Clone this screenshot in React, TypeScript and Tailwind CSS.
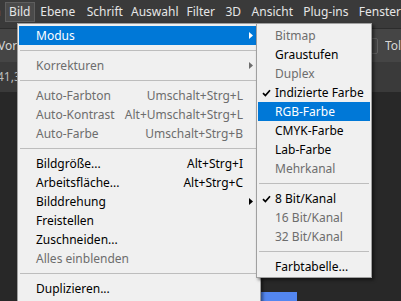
import React from "react";

type Item =
  | { sep: true }
  | {
      sep?: false;
      label: string;
      shortcut?: string;
      disabled?: boolean;
      active?: boolean;
      sub?: boolean;
      checked?: boolean;
    };

const mainMenu: Item[] = [
  { label: "Modus", sub: true, active: true },
  { sep: true },
  { label: "Korrekturen", sub: true, disabled: true },
  { sep: true },
  { label: "Auto-Farbton", shortcut: "Umschalt+Strg+L", disabled: true },
  { label: "Auto-Kontrast", shortcut: "Alt+Umschalt+Strg+L", disabled: true },
  { label: "Auto-Farbe", shortcut: "Umschalt+Strg+B", disabled: true },
  { sep: true },
  { label: "Bildgröße...", shortcut: "Alt+Strg+I" },
  { label: "Arbeitsfläche...", shortcut: "Alt+Strg+C" },
  { label: "Bilddrehung", sub: true },
  { label: "Freistellen" },
  { label: "Zuschneiden..." },
  { label: "Alles einblenden", disabled: true },
  { sep: true },
  { label: "Duplizieren..." },
];

const modusMenu: Item[] = [
  { label: "Bitmap", disabled: true },
  { label: "Graustufen" },
  { label: "Duplex", disabled: true },
  { label: "Indizierte Farbe", checked: true },
  { label: "RGB-Farbe", active: true },
  { label: "CMYK-Farbe" },
  { label: "Lab-Farbe" },
  { label: "Mehrkanal", disabled: true },
  { sep: true },
  { label: "8 Bit/Kanal", checked: true },
  { label: "16 Bit/Kanal", disabled: true },
  { label: "32 Bit/Kanal", disabled: true },
  { sep: true },
  { label: "Farbtabelle..." },
];

const menuBar = [
  { label: "Bild", w: "w-[30px]", open: true },
  { label: "Ebene", w: "w-[46px]" },
  { label: "Schrift", w: "w-[48px]" },
  { label: "Auswahl", w: "w-[52px]" },
  { label: "Filter", w: "w-[40px]" },
  { label: "3D", w: "w-[25px]" },
  { label: "Ansicht", w: "w-[53px]" },
  { label: "Plug-ins", w: "w-[54px]" },
];

function MenuRows({ items }: { items: Item[] }) {
  return (
    <>
      {items.map((it, i) => {
        if (it.sep) {
          return (
            <div key={i} className="h-[11px] flex items-center px-px">
              <div className="h-px w-full bg-[#bdbdbd]" />
            </div>
          );
        }
        const color = it.active ? "text-white" : it.disabled ? "text-[#6d6d6d]" : "text-black";
        return (
          <div
            key={i}
            className={`relative h-[19px] flex items-center pl-[17px] pr-[16px] whitespace-nowrap ${color} ${
              it.active ? "bg-[#0078d7]" : ""
            }`}
          >
            {it.checked && (
              <svg className="absolute left-[4px] top-[6px] w-[9px] h-[8px]" viewBox="0 0 9 8">
                <path d="M1 4.2 L3.4 6.6 L8 1.2" fill="none" stroke="#000" strokeWidth={1.7} />
              </svg>
            )}
            <span className="flex-1">{it.label}</span>
            {it.shortcut && <span>{it.shortcut}</span>}
            {it.sub && (
              <svg className="absolute right-[6px] top-[6px] w-[4px] h-[7px]" viewBox="0 0 4 7">
                <path d="M0 0 L4 3.5 L0 7 Z" fill="currentColor" />
              </svg>
            )}
          </div>
        );
      })}
    </>
  );
}

export default function App() {
  return (
    <div className="relative w-[401px] h-[301px] overflow-hidden bg-[#282828] text-[12px] font-['Noto_Sans',sans-serif] flex flex-col">
      {/* Menu bar */}
      <div className="h-[28px] shrink-0 bg-[#3a3a3a] flex items-start pt-[2px] text-[#e6e6e6]">
        <div className="w-[18px] h-[20px] flex items-center justify-end pr-[4px] overflow-hidden whitespace-nowrap">
          Bearbeiten
        </div>
        {menuBar.map((m) => (
          <div
            key={m.label}
            className={`${m.w} h-[20px] flex items-center justify-center shrink-0 ${
              m.open ? "bg-[#4a4a4a] border border-[#5e5e5e]" : ""
            }`}
          >
            {m.label}
          </div>
        ))}
        <div className="h-[20px] flex items-center pl-[6px] whitespace-nowrap">Fenster</div>
      </div>

      {/* Options bar */}
      <div className="h-[34px] shrink-0 bg-[#454545] border-t border-[#2c2c2c] flex items-center text-[#d6d6d6] whitespace-nowrap">
        <span className="-ml-[2px]">Vorderg.</span>
        <div className="ml-auto w-[18px] h-[16px] border border-[#606060] rounded-[2px] flex items-center justify-center">
          <svg className="w-[6px] h-[5px]" viewBox="0 0 6 5">
            <path d="M0.5 1 L3 4 L5.5 1" fill="none" stroke="#9a9a9a" strokeWidth={1} />
          </svg>
        </div>
        <span className="ml-[7px] w-[16px] overflow-hidden">Toleranz</span>
      </div>

      {/* Tab bar */}
      <div className="h-[30px] shrink-0 bg-[#3a3a3a] flex items-center text-[#bdbdbd] whitespace-nowrap">
        <span className="-ml-[3px]">41,3% (RGB/8#)</span>
      </div>

      {/* Canvas */}
      <div className="flex-1 bg-[#282828]">
        <div className="ml-[261px] mt-[200px] w-[36px] h-[12px] bg-[#5386f0]" />
      </div>

      {/* Bild menu */}
      <div className="absolute left-[17px] top-[23px] w-[244px] h-[290px] bg-[#f0f0f0] border border-[#a0a0a0] px-px pt-[2px] shadow-[2px_2px_3px_rgba(0,0,0,0.45)]">
        <MenuRows items={mainMenu} />
      </div>

      {/* Modus submenu */}
      <div className="absolute left-[256px] top-[23px] w-[116px] bg-[#f0f0f0] border border-[#a0a0a0] px-px pt-[2px] pb-[1px] shadow-[2px_2px_3px_rgba(0,0,0,0.5)]">
        <MenuRows items={modusMenu} />
      </div>
    </div>
  );
}
